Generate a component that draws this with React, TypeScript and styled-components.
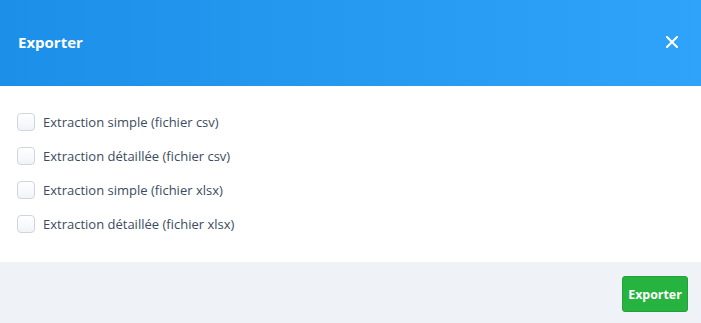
import React from "react";
import styled, { createGlobalStyle } from "styled-components";

const Global = createGlobalStyle`
  html, body { margin: 0; padding: 0; background: #ffffff; }
  body { font-family: "Open Sans", "Noto Sans", sans-serif; }
`;

const Modal = styled.div`
  width: 701px;
  height: 323px;
  display: flex;
  flex-direction: column;
  background: #ffffff;
`;

const Header = styled.div`
  height: 86px;
  display: flex;
  align-items: center;
  justify-content: space-between;
  padding: 0 18px 3px;
  box-sizing: border-box;
  background: linear-gradient(90deg, #1c8fe8 0%, #2fa2f9 100%);
`;

const Title = styled.h2`
  margin: 0;
  font-size: 15px;
  font-weight: 700;
  color: #ffffff;
`;

const Close = styled.button`
  border: 0;
  background: transparent;
  padding: 0;
  margin-right: 5px;
  width: 12px;
  height: 12px;
  display: flex;
  cursor: pointer;
`;

const Body = styled.div`
  flex: 1;
  display: flex;
  flex-direction: column;
  gap: 16px;
  padding: 27px 0 0 17px;
  box-sizing: border-box;
`;

const Row = styled.label`
  display: flex;
  align-items: center;
  gap: 8px;
  height: 18px;
  font-size: 13px;
  color: #3c4b5f;
  cursor: pointer;
`;

const Box = styled.span`
  width: 16px;
  height: 16px;
  border: 1px solid #cfd5df;
  border-radius: 4px;
  background: linear-gradient(180deg, #ffffff 0%, #f1f4f8 100%);
  flex: none;
`;

const Footer = styled.div`
  height: 61px;
  background: #eff2f7;
  display: flex;
  justify-content: flex-end;
  align-items: flex-start;
  padding: 14px 13px 0 0;
  box-sizing: border-box;
`;

const Button = styled.button`
  width: 66px;
  height: 36px;
  border: 1px solid #22a13a;
  border-radius: 3px;
  background: #27b33f;
  color: #ffffff;
  font-family: "Open Sans", "Noto Sans", sans-serif;
  font-size: 12.4px;
  font-weight: 700;
  padding: 0;
  cursor: pointer;
`;

const options = [
  "Extraction simple (fichier csv)",
  "Extraction détaillée (fichier csv)",
  "Extraction simple (fichier xlsx)",
  "Extraction détaillée (fichier xlsx)",
];

export default function App() {
  return (
    <>
      <Global />
      <Modal>
        <Header>
          <Title>Exporter</Title>
          <Close aria-label="Fermer">
            <svg width="12" height="12" viewBox="0 0 12 12">
              <path d="M1 1 L11 11 M11 1 L1 11" stroke="#ffffff" strokeWidth="2" strokeLinecap="square" />
            </svg>
          </Close>
        </Header>
        <Body>
          {options.map((o) => (
            <Row key={o}>
              <Box />
              {o}
            </Row>
          ))}
        </Body>
        <Footer>
          <Button>Exporter</Button>
        </Footer>
      </Modal>
    </>
  );
}
